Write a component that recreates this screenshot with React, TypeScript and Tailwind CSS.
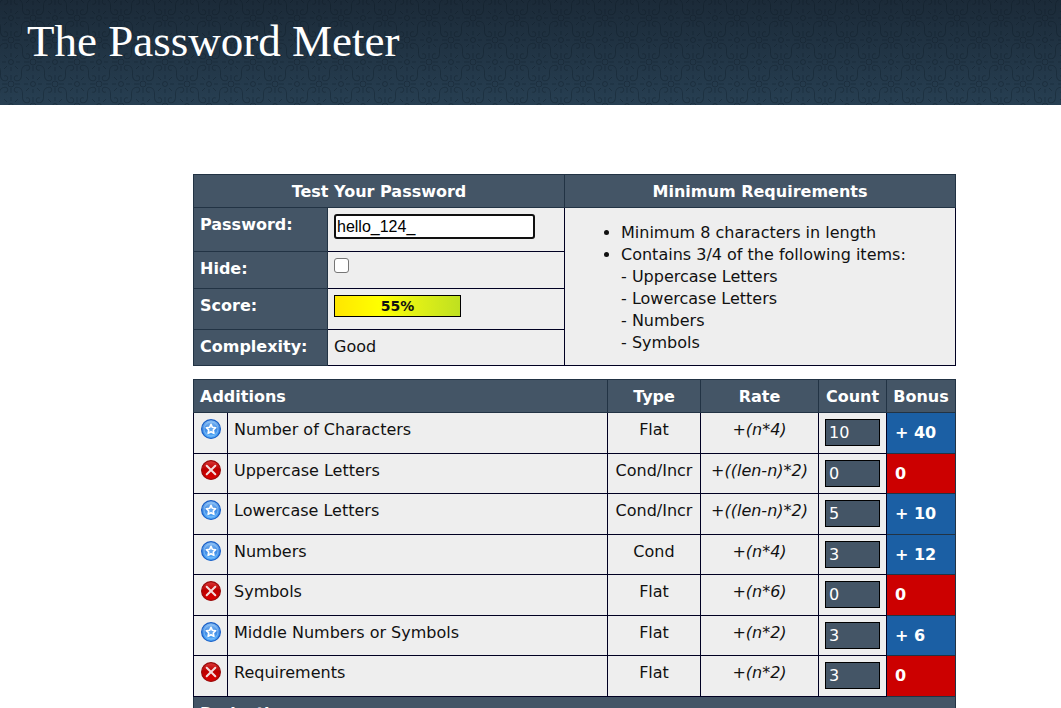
import React from 'react';

type Row = { label: string; type: string; rate: string; count: string; bonus: string; ok: boolean };

const additions: Row[] = [
  { label: 'Number of Characters', type: 'Flat', rate: '+(n*4)', count: '10', bonus: '+ 40', ok: true },
  { label: 'Uppercase Letters', type: 'Cond/Incr', rate: '+((len-n)*2)', count: '0', bonus: '0', ok: false },
  { label: 'Lowercase Letters', type: 'Cond/Incr', rate: '+((len-n)*2)', count: '5', bonus: '+ 10', ok: true },
  { label: 'Numbers', type: 'Cond', rate: '+(n*4)', count: '3', bonus: '+ 12', ok: true },
  { label: 'Symbols', type: 'Flat', rate: '+(n*6)', count: '0', bonus: '0', ok: false },
  { label: 'Middle Numbers or Symbols', type: 'Flat', rate: '+(n*2)', count: '3', bonus: '+ 6', ok: true },
  { label: 'Requirements', type: 'Flat', rate: '+(n*2)', count: '3', bonus: '0', ok: false },
];

const th = 'border border-[#223344] bg-[#445566] pt-0.5 font-bold text-white';
const rowHead = 'border border-[#223344] bg-[#445566] px-1.5 pt-1.5 text-left align-top font-bold text-white';
const cell = 'border border-[#000022] bg-[#eeeeee] pt-1.5 align-top';
const td = `${cell} px-1.5`;

function StatusIcon({ ok }: { ok: boolean }) {
  return ok ? (
    <svg viewBox="0 0 20 20" className="block size-5" role="img" aria-label="Exceptional">
      <defs>
        <linearGradient id="blue" x1="0" y1="0" x2="0" y2="1">
          <stop offset="0" stopColor="#8cc0f4" />
          <stop offset="0.5" stopColor="#3f8ae4" />
          <stop offset="1" stopColor="#58b4ff" />
        </linearGradient>
      </defs>
      <circle cx="10" cy="10" r="9.4" fill="url(#blue)" stroke="#1a5fc6" strokeWidth="1.2" />
      <circle cx="10" cy="10" r="7" fill="none" stroke="#a5d0fa" strokeOpacity="0.7" strokeWidth="0.8" />
      <path d="M10 5.300l1.400 3 3.300.4-2.400 2.300.6 3.300-2.900-1.600-2.900 1.600.6-3.300-2.400-2.300 3.300-.4z" fill="#68a8ee" stroke="#fff" strokeWidth="1.6" strokeLinejoin="round" />
    </svg>
  ) : (
    <svg viewBox="0 0 20 20" className="block size-5" role="img" aria-label="Failure">
      <defs>
        <linearGradient id="red" x1="0" y1="0" x2="0" y2="1">
          <stop offset="0" stopColor="#dc3838" />
          <stop offset="0.45" stopColor="#bb0000" />
          <stop offset="1" stopColor="#e00000" />
        </linearGradient>
      </defs>
      <circle cx="10" cy="10" r="9.4" fill="url(#red)" stroke="#960c0c" strokeWidth="1.2" />
      <path d="M5.700 5.700l8.600 8.600M14.300 5.700l-8.600 8.600" stroke="#f4dede" strokeWidth="2" strokeLinecap="round" />
    </svg>
  );
}

function HeaderPattern() {
  return (
    <svg className="absolute inset-0 h-full w-full" aria-hidden="true">
      <defs>
        <g id="rosette">
          <circle r="2.500" />
          <path d="M0-5v-4M0 5v4M-5 0h-4M5 0h4M-4-4l-3-3M4-4l3-3M-4 4l-3 3M4 4l3 3" />
        </g>
        <path id="curl" d="M-4-3C-3-6-8-8-9-4C-9 0-5 1-2 0L2-1C5-2 9 0 9 4C8 8 3 6 4 3" />
        <pattern id="scroll" x="11" y="18" width="44" height="44" patternUnits="userSpaceOnUse">
          <g fill="none" stroke="#07131f" strokeOpacity="0.3" strokeWidth="1">
            <use href="#rosette" />
            <use href="#rosette" x="44" />
            <use href="#rosette" y="44" />
            <use href="#rosette" x="44" y="44" />
            <use href="#rosette" x="22" y="22" />
            <use href="#curl" transform="translate(11 11) rotate(-75)" />
            <use href="#curl" transform="translate(33 33) rotate(-75)" />
            <use href="#curl" transform="translate(33 11) scale(-1 1) rotate(-75)" />
            <use href="#curl" transform="translate(11 33) scale(-1 1) rotate(-75)" />
            <circle cx="22" cy="0" r="3" />
            <circle cx="22" cy="44" r="3" />
            <circle cx="0" cy="22" r="3" />
            <circle cx="44" cy="22" r="3" />
            <path d="M22 4v5M22 35v5M4 22h5M35 22h5M26 0h5M13 0h5M26 44h5M13 44h5M0 26v5M0 13v5M44 26v5M44 13v5" />
          </g>
        </pattern>
      </defs>
      <rect width="100%" height="100%" fill="url(#scroll)" />
    </svg>
  );
}

export default function App() {
  return (
    <div className="h-screen overflow-hidden bg-white font-['DejaVu_Sans',sans-serif] text-[16px] leading-[22px] text-[#111111]">
      <header className="relative h-[105px] bg-linear-to-b from-[#1b2a38] to-[#273f52]">
        <HeaderPattern />
        <h1 className="relative px-[27px] pt-[14px] font-['Liberation_Serif',serif] text-[45px] leading-[54px] text-white">The Password Meter</h1>
      </header>

      <main className="pt-[69px] pr-[105px] pl-[193px]">
        <table className="w-full table-fixed border-collapse">
          <colgroup>
            <col className="w-[134px]" />
            <col className="w-[237px]" />
            <col />
          </colgroup>
          <thead>
            <tr className="h-[33px]">
              <th className={th} colSpan={2}>Test Your Password</th>
              <th className={th}>Minimum Requirements</th>
            </tr>
          </thead>
          <tbody>
            <tr className="h-[44px]">
              <th className={rowHead}><label htmlFor="password">Password:</label></th>
              <td className={td}>
                <input id="password" type="text" defaultValue="hello_124_" className="block h-[25px] w-[201px] rounded-[3px] border-2 border-[#101010] bg-white px-px font-['Liberation_Sans',sans-serif] text-[16px] text-black outline-none" />
              </td>
              <td className={td} rowSpan={4}>
                <ul className="list-disc pt-2 pl-[50px]">
                  <li>Minimum 8 characters in length</li>
                  <li>
                    Contains 3/4 of the following items:
                    <br />- Uppercase Letters
                    <br />- Lowercase Letters
                    <br />- Numbers
                    <br />- Symbols
                  </li>
                </ul>
              </td>
            </tr>
            <tr className="h-[37px]">
              <th className={rowHead}><label htmlFor="hide">Hide:</label></th>
              <td className={td}>
                <input id="hide" type="checkbox" className="block size-[15px] appearance-none rounded-[3px] border border-[#767676] bg-white" />
              </td>
            </tr>
            <tr className="h-[41px]">
              <th className={rowHead}>Score:</th>
              <td className={td}>
                <div className="h-[22px] w-[127px] border border-black bg-linear-to-r from-[#ffe600] via-[#ffff00] via-35% to-[#bfe020] text-center text-[14px] leading-[21px] font-bold">55%</div>
              </td>
            </tr>
            <tr className="h-[36px]">
              <th className={rowHead}>Complexity:</th>
              <td className={td}>Good</td>
            </tr>
          </tbody>
        </table>

        <table className="mt-[13px] w-full table-fixed border-collapse">
          <colgroup>
            <col className="w-[34px]" />
            <col />
            <col className="w-[93px]" />
            <col className="w-[118px]" />
            <col className="w-[68px]" />
            <col className="w-[69px]" />
          </colgroup>
          <thead>
            <tr className="h-[33px]">
              <th className={`${th} px-1.5 text-left`} colSpan={2}>Additions</th>
              <th className={th}>Type</th>
              <th className={th}>Rate</th>
              <th className={th}>Count</th>
              <th className={th}>Bonus</th>
            </tr>
          </thead>
          <tbody>
            {additions.map((r) => (
              <tr key={r.label} className="odd:h-[41px] even:h-[40px]">
                <td className={`${cell} pl-[7px]`}><StatusIcon ok={r.ok} /></td>
                <td className={td}>{r.label}</td>
                <td className={`${cell} text-center`}>{r.type}</td>
                <td className={`${cell} text-center whitespace-nowrap italic`}>{r.rate}</td>
                <td className={td}>
                  <input aria-label={`${r.label} count`} readOnly value={r.count} className="block h-[27px] w-full border border-black bg-[#445566] px-[3px] text-[16px] text-white" />
                </td>
                <td className={r.ok ? 'border border-[#223344] bg-[#1b5fa4] px-2 font-bold text-white' : 'border border-[#223344] bg-[#cc0000] px-2 font-bold text-white'}>{r.bonus}</td>
              </tr>
            ))}
          </tbody>
          <tbody>
            <tr className="h-[33px]">
              <th className={`${th} px-1.5 text-left`} colSpan={6}>Deductions</th>
            </tr>
          </tbody>
        </table>
      </main>
    </div>
  );
}
